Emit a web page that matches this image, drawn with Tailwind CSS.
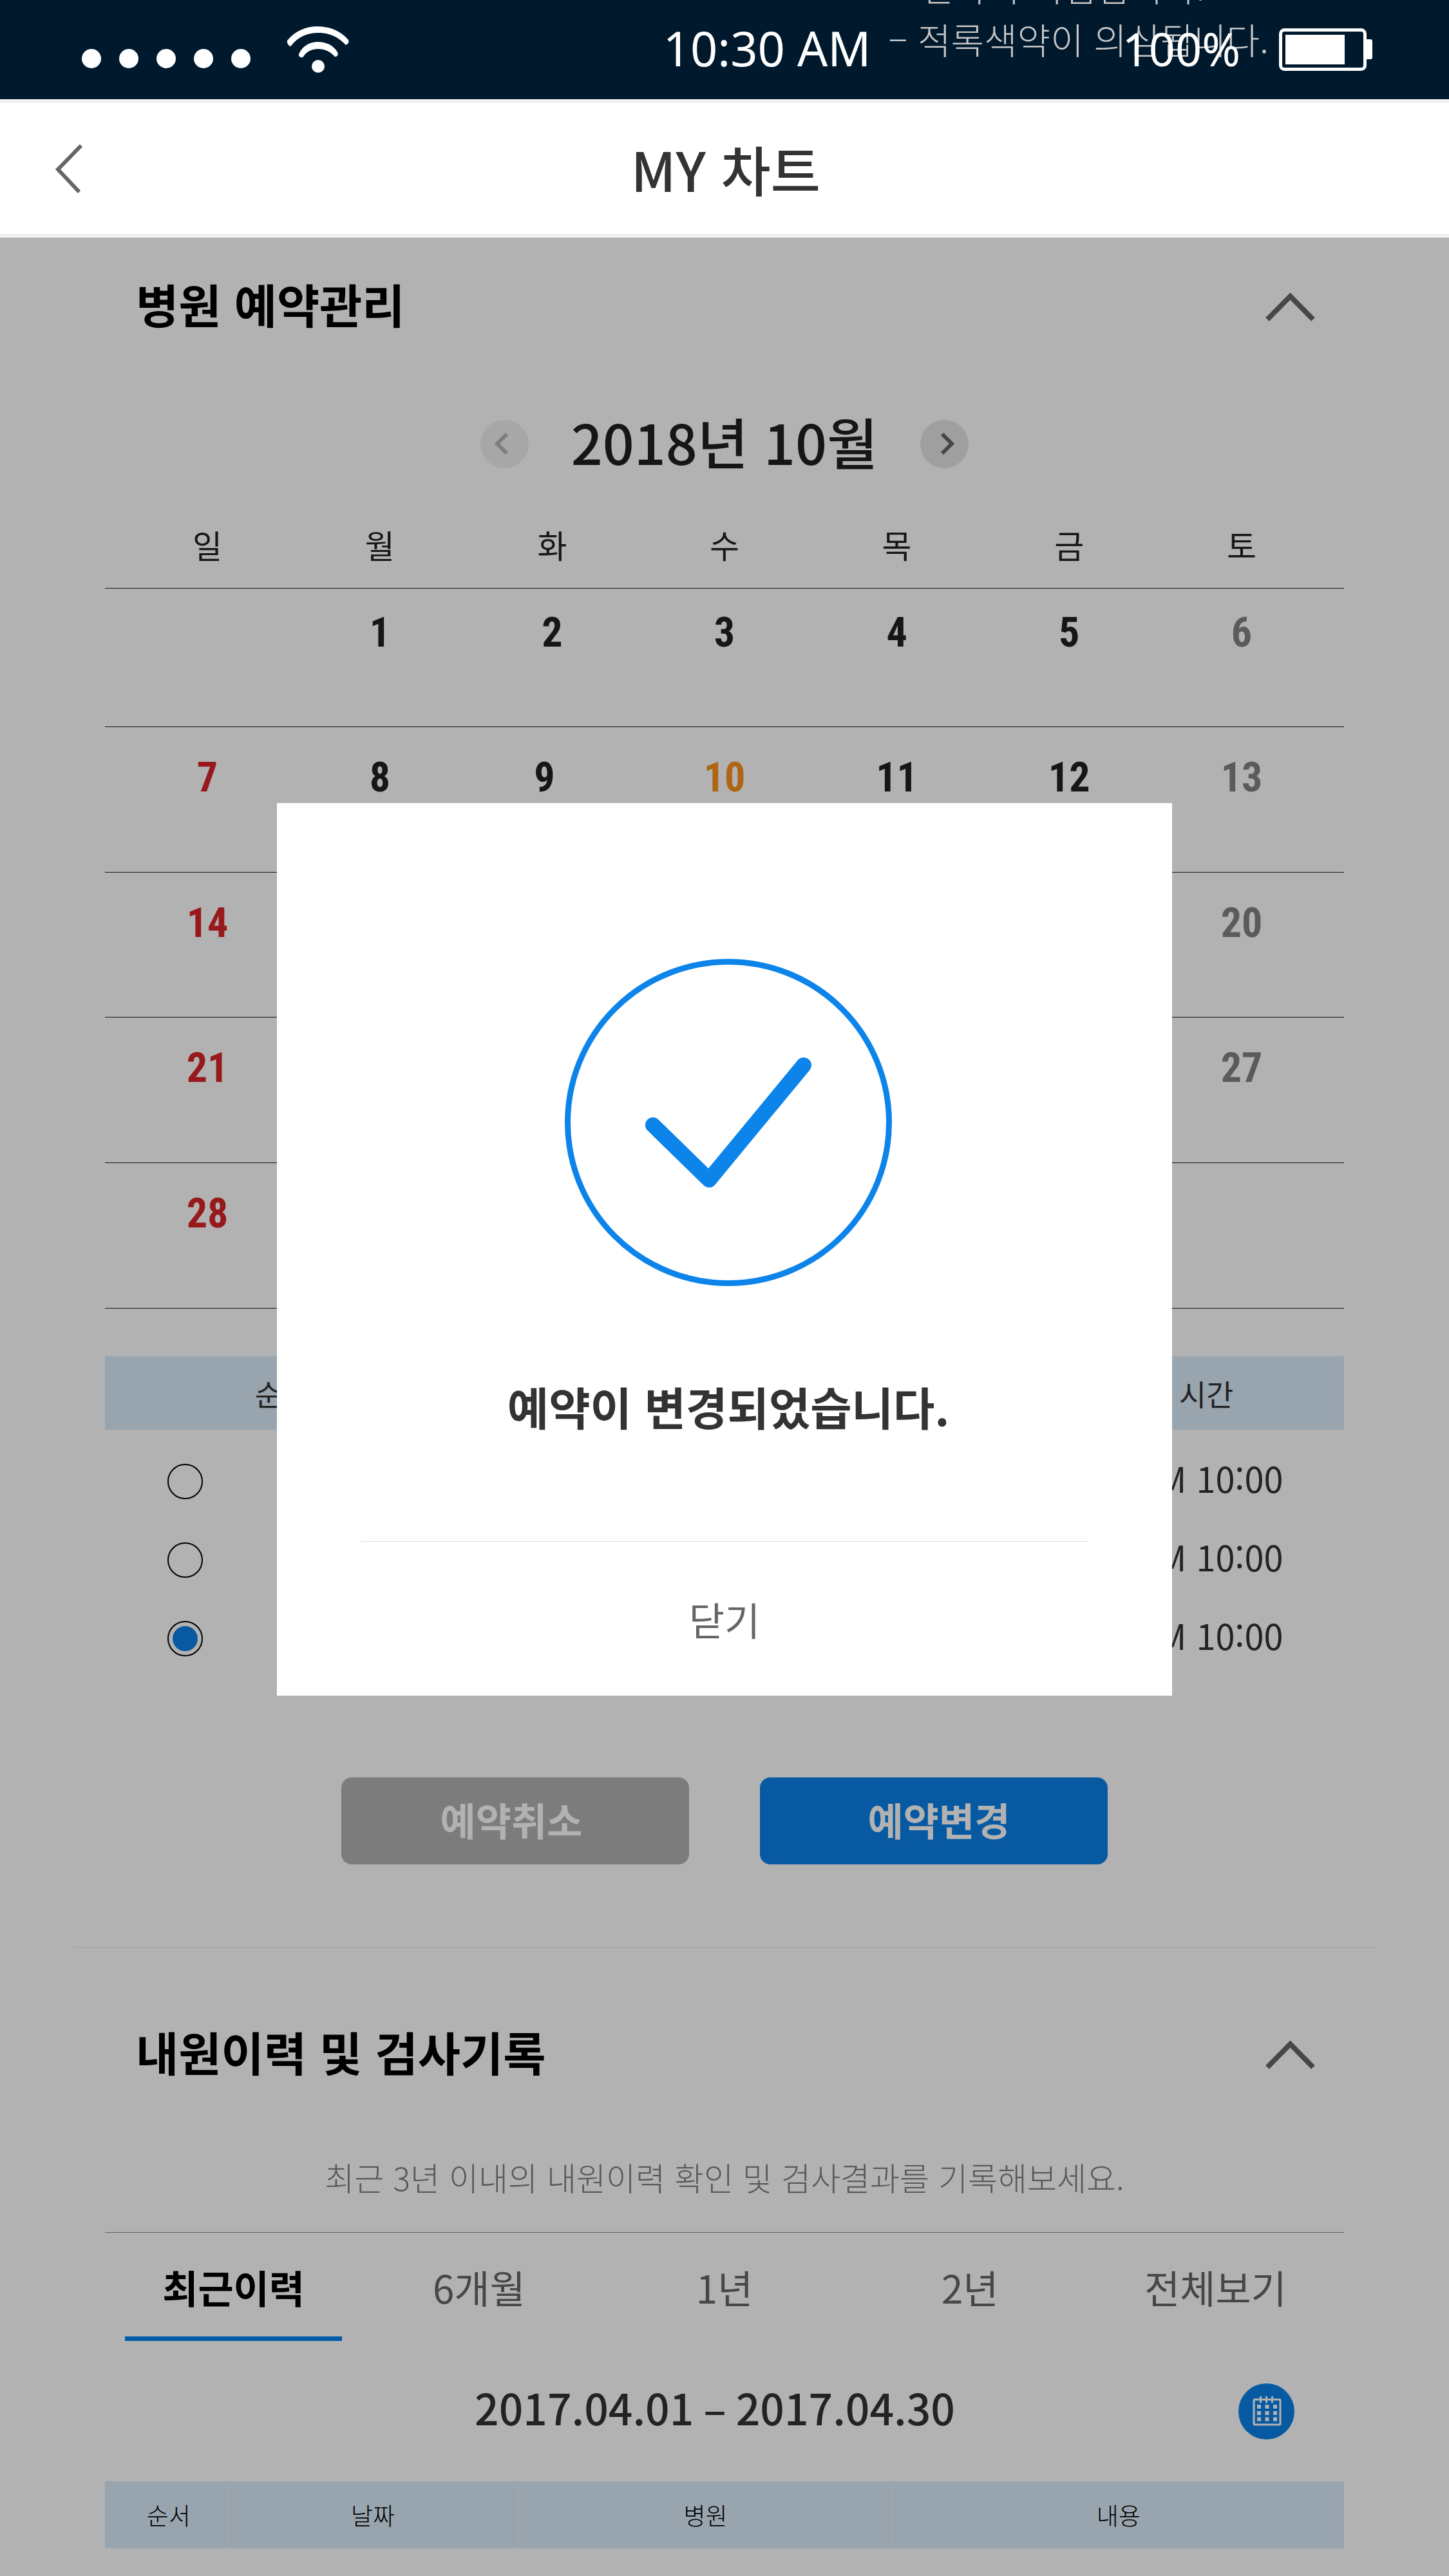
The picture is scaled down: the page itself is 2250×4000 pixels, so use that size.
<!DOCTYPE html>
<html lang="ko">
<head>
<meta charset="utf-8">
<meta name="viewport" content="width=device-width, initial-scale=1">
<title>MY 차트</title>
<script src="https://cdn.jsdelivr.net/npm/@tailwindcss/browser@4"></script>
</head>
<body class="bg-white font-['Noto_Sans_CJK_KR',sans-serif] text-[#231f20]">
<div class="relative flex h-screen min-h-[4000px] flex-col overflow-hidden">

  <!-- Status bar -->
  <div class="relative flex h-[154px] shrink-0 items-center bg-[#00192d] pr-[119px] pl-[127px] font-['Noto_Sans',sans-serif] text-[74px] leading-[96px] text-white">
    <div class="flex grow-5 items-center gap-[56px]">
      <div class="flex gap-7 pt-7">
        <span class="size-[30px] rounded-full bg-white"></span>
        <span class="size-[30px] rounded-full bg-white"></span>
        <span class="size-[30px] rounded-full bg-white"></span>
        <span class="size-[30px] rounded-full bg-white"></span>
        <span class="size-[30px] rounded-full bg-white"></span>
      </div>
      <svg class="h-[72px] w-[97px]" viewBox="0 0 97 72" fill="none" aria-label="Wi-Fi">
        <path d="M4 30C4 30 0 26 1 22C13 7 30 0 48 0C67 0 84 7 96 21C98 26 93 30 91 28C80 16 66 10 49 10C32 10 17 17 8 29C7 31 5 31 4 30Z" fill="#fff"/>
        <path d="M19 43C25 30 36 24 49 24C62 24 73 30 79 40C82 45 76 49 74 46C68 39 59 35 49 35C39 35 31 39 26 47C24 50 18 47 19 43Z" fill="#fff"/>
        <circle cx="49" cy="62" r="10" fill="#fff"/>
      </svg>
    </div>
    <div class="pb-1">10:30 AM</div>
    <div class="flex grow-4 items-center justify-end gap-[60px]">
      <span class="relative z-10 pb-1 text-[72px]">100%</span>
      <svg class="h-[66px] w-[145px]" viewBox="0 0 145 66" fill="none" aria-label="배터리">
        <rect x="2.5" y="2.5" width="131" height="61" rx="6" stroke="#fff" stroke-width="5"/>
        <rect x="10" y="10" width="92" height="46" fill="#fff"/>
        <path d="M136 17H142Q145 17 145 20V45Q145 48 142 48H136Z" fill="#fff"/>
      </svg>
    </div>
    <p class="absolute -top-[63px] right-[280px] flex flex-col font-['Noto_Sans_CJK_KR',sans-serif] text-[56px] leading-[82px] font-light text-[#c8c8c8]">
      <span class="pl-[50px]">전약이 의심됩니다.</span>
      <span>– 적록색약이 의심됩니다.</span>
    </p>
  </div>

  <!-- App header -->
  <header class="flex h-[215px] shrink-0 items-center border-y-[6px] border-[#f0f0f0] bg-white px-[85px]">
    <button type="button" aria-label="뒤로" class="w-[44px]">
      <svg class="h-[78px] w-[44px]" viewBox="0 0 44 78" fill="none"><path d="M41 3L5 40L38 75" stroke="#666" stroke-width="6"/></svg>
    </button>
    <h1 class="grow pr-[40px] text-center text-[84px] leading-[96px] font-medium text-[#333]">MY 차트</h1>
  </header>

  <main class="relative grow bg-white">
    <!-- Reservations -->
    <section class="px-[163px] pt-[52px]">
      <div class="flex h-[100px] items-center justify-between pr-[45px] pl-[48px]">
        <h2 class="text-[72px] leading-[96px] font-bold text-black">병원 예약관리</h2>
        <button type="button" aria-label="접기" class="pt-3"><svg class="h-[44px] w-[77px]" viewBox="0 0 77 44" fill="none"><path d="M3 41L38.500 5L74 41" stroke="#666" stroke-width="8"/></svg></button>
      </div>

      <div class="mt-[120px] flex h-[96px] items-center justify-center gap-[66px]">
        <button type="button" aria-label="이전 달" class="flex size-[75px] items-center justify-center rounded-full bg-[#efefef]"><svg class="-ml-2 h-[36px] w-[22px]" viewBox="0 0 22 36" fill="none"><path d="M19 3L4 18L19 33" stroke="#b3b3b3" stroke-width="6"/></svg></button>
        <h3 class="pb-2 text-[86px] leading-[96px] font-medium">2018년 10월</h3>
        <button type="button" aria-label="다음 달" class="flex size-[75px] items-center justify-center rounded-full bg-[#e4e4e4]"><svg class="-mr-2 h-[36px] w-[22px]" viewBox="0 0 22 36" fill="none"><path d="M3 3L18 18L3 33" stroke="#666" stroke-width="6"/></svg></button>
      </div>

      <table class="mt-12 w-full table-fixed border-collapse text-center">
        <colgroup><col class="w-[293px]"><col><col><col><col><col><col class="w-[293px]"></colgroup>
        <thead class="text-[50px] leading-[120px]">
          <tr class="h-[128px] border-b border-[#231f20] align-top *:font-normal"><th class="pl-[25px]">일</th><th>월</th><th>화</th><th>수</th><th>목</th><th>금</th><th class="pr-[25px]">토</th></tr>
        </thead>
        <tbody class="font-['Liberation_Sans_Narrow','Roboto_Condensed','Open_Sans_Condensed','Noto_Sans_Condensed','Noto_Sans_CJK_KR',sans-serif] text-[64px] leading-[72px] font-bold">
          <tr class="h-[215px] border-b border-[#231f20] align-top *:pt-[33px]"><td></td><td>1</td><td>2</td><td>3</td><td>4</td><td>5</td><td class="pr-[25px] text-[#838383]">6</td></tr>
          <tr class="h-[226px] border-b border-[#231f20] align-top *:pt-[43px]"><td class="pl-[25px] text-[#d82427]">7</td><td>8</td><td class="pr-6">9</td><td class="text-[#fa911d]">10</td><td>11</td><td>12</td><td class="pr-[25px] text-[#838383]">13</td></tr>
          <tr class="h-[225px] border-b border-[#231f20] align-top *:pt-[43px]"><td class="pl-[25px] text-[#d82427]">14</td><td>15</td><td>16</td><td>17</td><td>18</td><td>19</td><td class="pr-[25px] text-[#838383]">20</td></tr>
          <tr class="h-[226px] border-b border-[#231f20] align-top *:pt-[43px]"><td class="pl-[25px] text-[#d82427]">21</td><td>22</td><td>23</td><td>24</td><td>25</td><td>26</td><td class="pr-[25px] text-[#838383]">27</td></tr>
          <tr class="h-[226px] border-b border-[#231f20] align-top *:pt-[43px]"><td class="pl-[25px] text-[#d82427]">28</td><td>29</td><td>30</td><td>31</td><td></td><td></td><td class="pr-[25px]"></td></tr>
        </tbody>
      </table>

      <table class="mt-[74px] w-full table-fixed border-collapse text-center text-[#333]">
        <colgroup><col class="w-[250px]"><col class="w-[50px]"><col><col class="w-[416px]"></colgroup>
        <thead class="bg-[#dcedfa] text-[46px] leading-[60px]">
          <tr class="h-[114px] *:font-normal"><th></th><th><span class="-mx-10 whitespace-nowrap">순서</span></th><th></th><th class="pr-3">시간</th></tr>
        </thead>
        <tbody class="text-[54px] leading-[60px]">
          <tr class="h-[142px] *:pt-5"><td><input type="radio" name="slot" aria-label="예약 1" class="block ml-[97px] size-[55px] appearance-none rounded-full border-2 border-black bg-white bg-clip-content p-[6px] checked:bg-[#0b82e8]"></td><td></td><td></td><td class="pb-3">AM 10:00</td></tr>
          <tr class="h-[122px]"><td><input type="radio" name="slot" aria-label="예약 2" class="block ml-[97px] size-[55px] appearance-none rounded-full border-2 border-black bg-white bg-clip-content p-[6px] checked:bg-[#0b82e8]"></td><td></td><td></td><td class="pb-3">AM 10:00</td></tr>
          <tr class="h-[122px]"><td><input type="radio" name="slot" checked aria-label="예약 3" class="block ml-[97px] size-[55px] appearance-none rounded-full border-2 border-black bg-white bg-clip-content p-[6px] checked:bg-[#0b82e8]"></td><td></td><td></td><td class="pb-3">AM 10:00</td></tr>
        </tbody>
      </table>

      <div class="mt-[154px] flex justify-center gap-[110px] text-[60px] leading-[72px] font-bold text-white">
        <button type="button" class="h-[135px] w-[540px] rounded-2xl bg-[#b2b2b2] pr-3 pb-1">예약취소</button>
        <button type="button" class="h-[135px] w-[540px] rounded-2xl bg-[#0b82e8] pb-1 pl-4">예약변경</button>
      </div>
    </section>

    <hr class="mx-[113px] mt-32 border-t-2 border-[#f1f1f1]">

    <!-- Visit history -->
    <section class="px-[163px] pt-[110px]">
      <div class="flex h-[100px] items-center justify-between pr-[45px] pl-[48px]">
        <h2 class="text-[72px] leading-[96px] font-bold text-black">내원이력 및 검사기록</h2>
        <button type="button" aria-label="접기" class="pt-3"><svg class="h-[44px] w-[77px]" viewBox="0 0 77 44" fill="none"><path d="M3 41L38.500 5L74 41" stroke="#666" stroke-width="8"/></svg></button>
      </div>
      <p class="mt-[115px] text-center text-[50px] leading-[60px] font-light text-[#808080]">최근 3년 이내의 내원이력 확인 및 검사결과를 기록해보세요.</p>

      <nav class="mt-14 grid grid-cols-5 border-t border-[#888] px-[9px] text-[60px] leading-[72px] text-[#666]">
        <button type="button" class="mx-[22px] h-[168px] border-b-[7px] border-[#0085f0] pt-2 font-bold text-black">최근이력</button>
        <button type="button" class="mx-[22px] h-[168px] border-b-[7px] border-transparent pt-2">6개월</button>
        <button type="button" class="mx-[22px] h-[168px] border-b-[7px] border-transparent pt-2">1년</button>
        <button type="button" class="mx-[22px] h-[168px] border-b-[7px] border-transparent pt-2">2년</button>
        <button type="button" class="mx-[22px] h-[168px] border-b-[7px] border-transparent pt-2">전체보기</button>
      </nav>

      <div class="mt-[66px] grid h-[87px] grid-cols-[1fr_auto_1fr] items-center pr-[77px] pl-[47px]">
        <p class="col-start-2 pb-4 text-[66px] leading-[72px] font-medium text-[#333]">2017.04.01 – 2017.04.30</p>
        <button type="button" aria-label="기간 선택" class="justify-self-end">
          <svg class="size-[87px]" viewBox="0 0 87 87" fill="none">
            <circle cx="43.500" cy="43.500" r="43.500" fill="#0b82e8"/>
            <rect x="24" y="25" width="41" height="39" rx="1.500" stroke="#fff" stroke-width="3"/>
            <path d="M34.500 21V29M43.500 21V29M52.500 21V29" stroke="#fff" stroke-width="3" stroke-linecap="round"/>
            <path d="M29 33h6v6h-6zM41.500 33h6v6h-6zM54 33h6v6h-6zM29 43h6v6h-6zM41.500 43h6v6h-6zM54 43h6v6h-6zM29 52.500h6v6h-6zM41.500 52.500h6v6h-6zM54 52.500h6v6h-6z" fill="#fff"/>
          </svg>
        </button>
      </div>

      <table class="mt-[65px] w-full table-fixed border-collapse text-center">
        <colgroup><col class="w-[190px]"><col class="w-[452px]"><col class="w-[581px]"><col></colgroup>
        <thead class="bg-[#dcedfa] text-[37px] leading-[48px] text-black">
          <tr class="h-[104px] *:font-light"><th class="border-r border-[#e8f3fc] pl-2">순서</th><th class="border-r border-[#e8f3fc]">날짜</th><th class="border-r border-[#e8f3fc]">병원</th><th>내용</th></tr>
        </thead>
      </table>
    </section>

    <!-- Confirmation dialog -->
    <div class="absolute inset-0 flex items-start justify-center bg-black/30 pt-[878px]">
      <div role="dialog" aria-modal="true" aria-labelledby="done" class="w-[1390px] max-w-full bg-white px-[130px] pt-[242px]">
        <div class="flex flex-col items-center pl-3">
          <svg class="size-[508px]" viewBox="0 0 508 508" fill="none">
            <circle cx="254" cy="254" r="249.500" stroke="#0c84ea" stroke-width="9"/>
            <path d="M137 258L224 343L371 165" stroke="#0c84ea" stroke-width="24" stroke-linecap="round" stroke-linejoin="round"/>
          </svg>
          <p id="done" class="mt-[139px] text-[70px] leading-[96px] font-bold text-[#333]">예약이 변경되었습니다.</p>
        </div>
        <button type="button" class="mt-[161px] h-[240px] w-full border-t border-[#ddd] text-[60px] leading-[72px] text-[#666]">닫기</button>
      </div>
    </div>
  </main>
</div>
</body>
</html>
